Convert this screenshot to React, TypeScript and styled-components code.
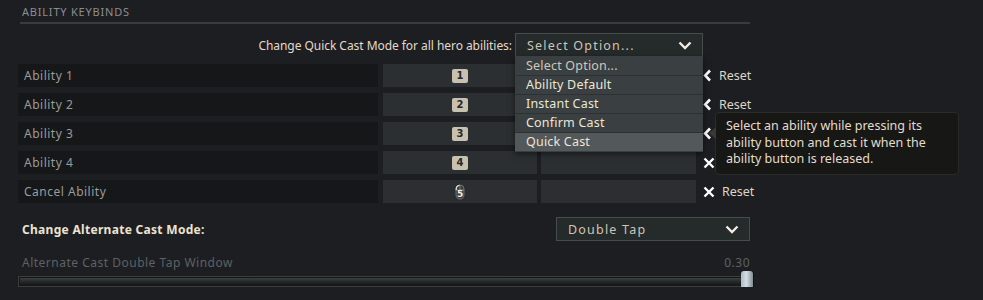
import React from "react";
import styled, { createGlobalStyle } from "styled-components";

const GlobalStyle = createGlobalStyle`
  html, body {
    margin: 0;
    padding: 0;
    background: #1d1e22;
  }
  body {
    font-family: "Noto Sans", "Open Sans", sans-serif;
    overflow: hidden;
  }
`;

const Panel = styled.div`
  width: 732px;
  margin-left: 18px;
  display: flex;
  flex-direction: column;
`;

const SectionTitle = styled.div`
  margin-left: 2px;
  padding: 5px 0 3px 2px;
  font-size: 11px;
  line-height: 14px;
  letter-spacing: 0.8px;
  color: #8b8d90;
  border-bottom: 2px solid #393b3e;
`;

const QuickCastBar = styled.div`
  margin-top: 9px;
  display: flex;
  justify-content: flex-end;
  align-items: center;
  gap: 3px;
  padding-right: 47px;
  position: relative;
  z-index: 2;
`;

const BarLabel = styled.span`
  font-size: 12px;
  letter-spacing: -0.05px;
  color: #e2dac9;
`;

const SelectBox = styled.div<{ $width: number }>`
  position: relative;
  box-sizing: border-box;
  width: ${(p) => p.$width}px;
  height: 24px;
  background: #252a2a;
  border: 1px solid #464c4b;
  display: flex;
  align-items: center;
  padding: 0 10px 0 11px;
  font-size: 12.5px;
  letter-spacing: 1.2px;
  color: #cdc6b6;
`;

const SelectText = styled.span`
  flex: 1;
`;

const Menu = styled.div`
  position: absolute;
  top: 100%;
  left: -1px;
  right: -1px;
  padding: 1px 0 1px 0;
  background: #3a3f42;
  box-shadow: 0 2px 6px rgba(0, 0, 0, 0.5);
`;

const MenuItem = styled.div<{ $active?: boolean; $muted?: boolean }>`
  height: 18px;
  line-height: 18px;
  padding: 0 11px;
  font-size: 12.5px;
  letter-spacing: 0.2px;
  border-top: 1px solid #2d3133;
  background: ${(p) => (p.$active ? "#53585b" : "transparent")};
  color: ${(p) => (p.$muted ? "#cfc8b9" : "#ece5d6")};
  &:first-child {
    border-top: none;
  }
`;

const Rows = styled.div`
  position: relative;
  margin-top: 7px;
  display: flex;
  flex-direction: column;
  gap: 6px;
`;

const Row = styled.div`
  display: grid;
  grid-template-columns: 361px 154px 155px 1fr;
  column-gap: 4px;
  height: 23px;
`;

const LabelCell = styled.div`
  background: #161718;
  margin-right: 1px;
  display: flex;
  align-items: center;
  padding-left: 6px;
  font-size: 12px;
  letter-spacing: 0.5px;
  color: #9a9b9c;
`;

const KeyCell = styled.div`
  background: #2c2f31;
  display: flex;
  align-items: center;
  justify-content: center;
`;

const KeyBadge = styled.span`
  min-width: 16px;
  height: 14px;
  border-radius: 2px;
  background: #c9c1af;
  color: #2a2724;
  font-size: 10px;
  font-weight: 700;
  line-height: 14px;
  text-align: center;
  font-family: "DejaVu Sans", sans-serif;
`;

const MouseKey = styled.span`
  position: relative;
  width: 14px;
  height: 16px;
  display: inline-flex;
`;

const MouseNum = styled.span`
  position: absolute;
  left: 4px;
  top: 5px;
  font-size: 9px;
  font-weight: 700;
  line-height: 10px;
  color: #f2eee6;
  font-family: "DejaVu Sans", sans-serif;
`;

const ResetCell = styled.div`
  display: flex;
  align-items: center;
  gap: 7px;
  padding-left: 3px;
  font-size: 12.5px;
  color: #ddd6c6;
`;

const Tooltip = styled.div`
  position: absolute;
  left: 697px;
  top: 48px;
  width: 222px;
  padding: 5px 10px 6px 10px;
  background: #171716;
  border: 1px solid #2b2b2a;
  border-radius: 4px;
  font-size: 12.5px;
  line-height: 16.5px;
  color: #e4ddcd;
  z-index: 3;
  &::before {
    content: "";
    position: absolute;
    left: -7px;
    top: 14px;
    border-top: 6px solid transparent;
    border-bottom: 6px solid transparent;
    border-right: 7px solid #3a3936;
  }
`;

const AltRow = styled.div`
  margin-top: 14px;
  display: flex;
  align-items: center;
  justify-content: space-between;
`;

const AltLabel = styled.span`
  padding-left: 4px;
  font-size: 12px;
  font-weight: 700;
  letter-spacing: 0.3px;
  color: #ebe3d2;
`;

const SliderHead = styled.div`
  margin-top: 13px;
  display: flex;
  justify-content: space-between;
  font-size: 12px;
  letter-spacing: 0.5px;
  color: #5e6165;
  padding-left: 4px;
`;

const Track = styled.div`
  position: relative;
  margin-top: 5px;
  height: 11px;
  width: 730px;
  box-sizing: border-box;
  border: 1px solid #3a3f3e;
  background: linear-gradient(#3e4644, #2a302f 40%, #101212);
  box-shadow: inset 0 0 0 1px #151817;
`;

const Thumb = styled.div`
  position: absolute;
  right: -6px;
  top: -6px;
  width: 12px;
  height: 21px;
  border-radius: 3px;
  background: linear-gradient(90deg, #a9bcc6, #d5dee3 45%, #7f8d95);
  box-shadow: 1px 0 0 #111;
`;

const ChevronDown = () => (
  <svg width="14" height="9" viewBox="0 0 14 9">
    <path d="M1.5 1.5 L7 7 L12.5 1.5" fill="none" stroke="#f0ece4" strokeWidth="2.4" />
  </svg>
);

const ChevronLeft = () => (
  <svg width="9" height="13" viewBox="0 0 9 13">
    <path d="M7 1.5 L2.2 6.5 L7 11.5" fill="none" stroke="#ffffff" strokeWidth="2.6" />
  </svg>
);

const Cross = () => (
  <svg width="12" height="12" viewBox="0 0 12 12">
    <path d="M1.5 1.5 L10.5 10.5 M10.5 1.5 L1.5 10.5" fill="none" stroke="#ffffff" strokeWidth="2.4" />
  </svg>
);

const MouseIcon = () => (
  <svg width="14" height="16" viewBox="0 0 14 16">
    <path d="M3 5 Q3 1 7 1 Q11 1 11 5 V10 Q11 15 7 15 Q3 15 3 10 Z" fill="#3a3c3d" stroke="#6f7273" strokeWidth="1" />
    <path d="M7 1.5 V6 M3 6 H11" stroke="#7d8081" strokeWidth="1" />
    <path d="M3.2 6 Q3 1.6 6.6 1.4" fill="none" stroke="#e2ded6" strokeWidth="1.3" />
  </svg>
);

type Bind = { name: string; key: string; mouse?: boolean; icon: "back" | "cross"; reset: boolean };

const binds: Bind[] = [
  { name: "Ability 1", key: "1", icon: "back", reset: true },
  { name: "Ability 2", key: "2", icon: "back", reset: true },
  { name: "Ability 3", key: "3", icon: "back", reset: false },
  { name: "Ability 4", key: "4", icon: "cross", reset: false },
  { name: "Cancel Ability", key: "5", mouse: true, icon: "cross", reset: true },
];

const options = ["Select Option...", "Ability Default", "Instant Cast", "Confirm Cast", "Quick Cast"];

export default function App() {
  return (
    <>
      <GlobalStyle />
      <Panel>
        <SectionTitle>ABILITY KEYBINDS</SectionTitle>
        <QuickCastBar>
          <BarLabel>Change Quick Cast Mode for all hero abilities:</BarLabel>
          <SelectBox $width={188}>
            <SelectText>Select Option...</SelectText>
            <ChevronDown />
            <Menu>
              {options.map((o, i) => (
                <MenuItem key={o} $muted={i === 0} $active={o === "Quick Cast"}>
                  {o}
                </MenuItem>
              ))}
            </Menu>
          </SelectBox>
        </QuickCastBar>
        <Rows>
          {binds.map((b) => (
            <Row key={b.name}>
              <LabelCell>{b.name}</LabelCell>
              <KeyCell>
                {b.mouse ? (
                  <MouseKey>
                    <MouseIcon />
                    <MouseNum>{b.key}</MouseNum>
                  </MouseKey>
                ) : (
                  <KeyBadge>{b.key}</KeyBadge>
                )}
              </KeyCell>
              <KeyCell />
              <ResetCell>
                {b.icon === "back" ? <ChevronLeft /> : <Cross />}
                {b.reset && <span>Reset</span>}
              </ResetCell>
            </Row>
          ))}
          <Tooltip>
            Select an ability while pressing its ability button and cast it when the ability button is released.
          </Tooltip>
        </Rows>
        <AltRow>
          <AltLabel>Change Alternate Cast Mode:</AltLabel>
          <SelectBox $width={194}>
            <SelectText>Double Tap</SelectText>
            <ChevronDown />
          </SelectBox>
        </AltRow>
        <SliderHead>
          <span>Alternate Cast Double Tap Window</span>
          <span>0.30</span>
        </SliderHead>
        <Track>
          <Thumb />
        </Track>
      </Panel>
    </>
  );
}
